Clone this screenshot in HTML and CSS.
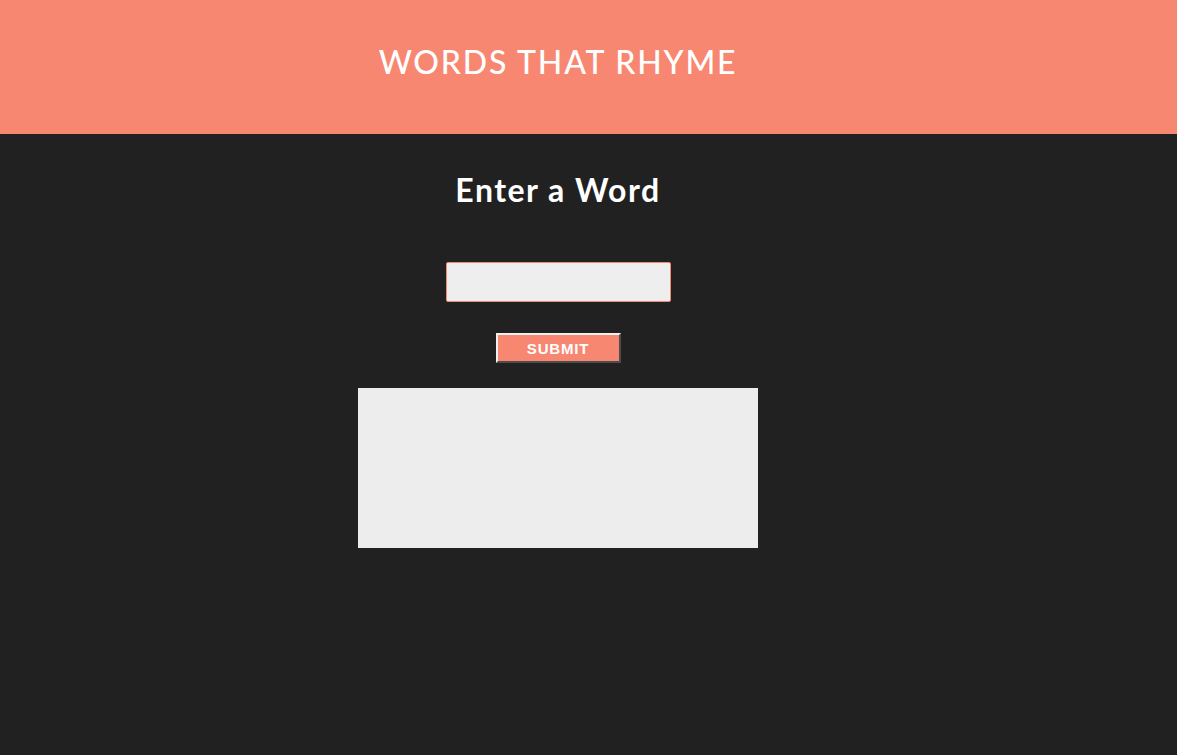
FILE: index.html
```html
<!DOCTYPE html>
<html>
<head>
<meta charset="utf-8">
<link rel="stylesheet" href="styles.css">
</head>
<body>
<header class="top">
  <div class="wrap">
    <h1 class="title">WORDS THAT RHYME</h1>
  </div>
</header>
<main class="wrap main">
  <h2 class="sub">Enter a Word</h2>
  <input class="word" type="text">
  <button class="submit">SUBMIT</button>
  <div class="results"></div>
</main>
</body>
</html>
```
FILE: styles.css
```css
html, body {
  margin: 0;
  padding: 0;
  background: #212121;
  height: 100%;
}
.wrap {
  width: 1116px;
  display: flex;
  flex-direction: column;
  align-items: center;
}
.top {
  background: #f88771;
  height: 134px;
}
.title {
  margin: 0;
  padding-top: 42px;
  font-family: "Lato", sans-serif;
  font-weight: 500;
  font-size: 32px;
  letter-spacing: 1.8px;
  color: #fff;
  line-height: 40px;
}
.sub {
  margin: 0;
  margin-top: 36px;
  font-family: "Lato", sans-serif;
  font-weight: 700;
  font-size: 32px;
  letter-spacing: 1.5px;
  color: #fff;
  line-height: 40px;
}
.word {
  margin-top: 52px;
  width: 225px;
  height: 40px;
  box-sizing: border-box;
  background: #eeeeee;
  border: 1px solid #f88771;
  border-radius: 2px;
  outline: none;
}
.submit {
  margin-top: 31px;
  width: 125px;
  height: 30px;
  box-sizing: border-box;
  background: #f88771;
  border: 2px outset #f0f0f0;
  border-right-color: #a0a0a0;
  border-bottom-color: #a0a0a0;
  color: #fff;
  font-family: "Liberation Sans", Arial, sans-serif;
  font-weight: 700;
  font-size: 15px;
  letter-spacing: 0.8px;
  padding: 0;
}
.results {
  margin-top: 25px;
  width: 400px;
  height: 160px;
  background: #ededed;
}
```
